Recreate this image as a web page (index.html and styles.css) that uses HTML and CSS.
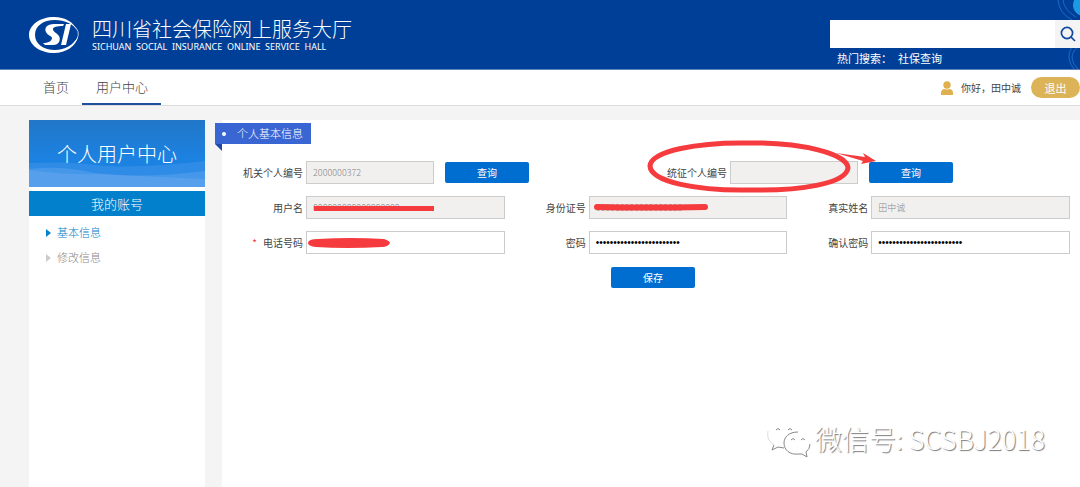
FILE: index.html
```html
<!DOCTYPE html>
<html lang="zh-CN">
<head>
<meta charset="utf-8">
<title>四川省社会保险网上服务大厅</title>
<link rel="stylesheet" href="styles.css">
</head>
<body>
<header class="header">
  <svg class="header-art" viewBox="0 0 30 69" aria-hidden="true">
    <circle cx="34" cy="5" r="11" fill="#1b9be6"/>
    <g fill="none" stroke="#1a6cc4">
      <path d="M8 0Q9 13 22 20"/><path d="M13 0Q14 10 26 17"/><path d="M30 41Q18 47 19 58Q20 65 24 69"/><path d="M30 46Q22 50 22 58Q23 65 28 69"/>
    </g>
  </svg>
  <div class="brand">
    <svg class="logo" viewBox="0 0 50 36" role="img" aria-label="SI">
      <path fill="#fff" fill-rule="evenodd" d="M48 14C45 5 36 0 25 0C11 0 0 8 0 18S11 36 25 36C37 36 47 29 49 20C44 28 36 33 26 33C15 33 6 27 6 18S14 3 26 3C36 3 45 7 48 14Z"/>
      <path fill="none" stroke="#fff" stroke-width=".7" d="M44 8Q52 14 48 22Q44 29 37 32"/>
      <path fill="#fff" d="M35 7H25C18 7 15 11 17 15C18 18 23 19 23 21C23 24 19 26 14 26L16 28H24C30 28 32 23 30 19C28 16 24 15 24 12C24 10 28 9 34 9Z"/>
      <path fill="#fff" d="M37 7H42L37 28H32Z"/>
    </svg>
    <div class="brand-text">
      <h1 class="brand-name">四川省社会保险网上服务大厅</h1>
      <p class="brand-en">SICHUAN  SOCIAL  INSURANCE  ONLINE  SERVICE  HALL</p>
    </div>
  </div>
  <div class="search-area">
    <form class="search">
      <input class="search-input" type="text" aria-label="搜索">
      <button class="search-button" type="button" aria-label="搜索">
        <svg class="search-icon" viewBox="0 0 16 16" fill="none" stroke="#114a9d" stroke-width="1.7"><circle cx="7" cy="7" r="5.6"/><path d="M11 11L15 15"/></svg>
      </button>
    </form>
    <p class="hot"><span>热门搜索：</span><a class="hot-link" href="#">社保查询</a></p>
  </div>
</header>

<nav class="nav">
  <div class="nav-links">
    <a class="nav-link" href="#">首页</a>
    <a class="nav-link nav-link-active" href="#">用户中心</a>
  </div>
  <div class="user">
    <svg class="user-icon" viewBox="0 0 12 14" fill="#dfb04e" aria-hidden="true"><circle cx="6" cy="4" r="3.7"/><path d="M0 14V12Q0 8 4 8Q6 9 8 8Q12 8 12 12V14Z"/></svg>
    <span>你好，田中诚</span>
    <button class="logout" type="button">退出</button>
  </div>
</nav>

<div class="page">
  <aside class="sidebar">
    <div class="banner">
      <svg class="banner-waves" viewBox="0 0 176 30" preserveAspectRatio="none" aria-hidden="true">
        <path fill="#2f8ce6" d="M0 6Q40 4 75 9Q120 11 176 4V30H0Z"/>
        <path fill="#4597ea" d="M0 12Q30 8 66 16Q110 22 176 14V30H0Z"/>
        <path fill="#569fec" d="M0 13Q34 18 70 17Q130 20 176 22V30H0Z"/>
      </svg>
      <h2 class="banner-title">个人用户中心</h2>
    </div>
    <h3 class="side-heading">我的账号</h3>
    <ul class="side-list">
      <li><a class="side-link side-link-active" href="#">基本信息</a></li>
      <li><a class="side-link" href="#">修改信息</a></li>
    </ul>
  </aside>

  <main class="main">
    <h2 class="ribbon">个人基本信息</h2>
    <form class="form">
      <div class="row row-two">
        <div class="field">
          <label class="label" for="org">机关个人编号</label>
          <input class="input input-short" id="org" type="text" value="2000000372" disabled>
          <button class="button" type="button">查询</button>
        </div>
        <div class="field">
          <label class="label" for="levy">统征个人编号</label>
          <input class="input input-short" id="levy" type="text" disabled>
          <button class="button" type="button">查询</button>
          <svg class="callout" viewBox="0 0 240 60" aria-hidden="true">
            <path fill="none" stroke="#f53b3d" stroke-width="5" d="M103 2C155 1 202 13 202 27C200 43 153 50 103 49C52 50 5 41 4 25C5 10 52 1 103 2Z"/>
            <path fill="#f53b3d" d="M190 12L219 16L217 12L230 20L215 23L217 20Z"/>
          </svg>
        </div>
      </div>
      <div class="row row-three">
        <div class="field">
          <label class="label" for="user">用户名</label>
          <input class="input" id="user" type="text" value="000000000000000000" disabled>
          <svg class="mark" viewBox="0 0 128 12" aria-hidden="true"><path fill="#f53b3d" d="M8 4H128V9H8Z"/></svg>
        </div>
        <div class="field">
          <label class="label" for="idno">身份证号</label>
          <input class="input" id="idno" type="text" value="000000000000000000" disabled>
          <svg class="mark" viewBox="0 0 128 12" aria-hidden="true"><path fill="none" stroke="#f53b3d" stroke-width="6" stroke-linecap="round" d="M8 5Q55 6 116 5"/></svg>
        </div>
        <div class="field">
          <label class="label" for="name">真实姓名</label>
          <input class="input" id="name" type="text" value="田中诚" disabled>
        </div>
      </div>
      <div class="row row-three">
        <div class="field">
          <label class="label" for="phone"><span class="required">*</span>电话号码</label>
          <input class="input" id="phone" type="tel">
          <svg class="mark" viewBox="0 0 128 12" aria-hidden="true"><path fill="#f53b3d" d="M2 6Q2 2 12 2Q45 0 78 2Q84 4 84 6Q82 10 76 10Q40 12 10 10Q2 9 2 6Z"/></svg>
        </div>
        <div class="field">
          <label class="label" for="pw">密码</label>
          <input class="input input-password" id="pw" type="password" value="abcdefghijklmnopqrstuvwx">
        </div>
        <div class="field">
          <label class="label" for="pw2">确认密码</label>
          <input class="input input-password" id="pw2" type="password" value="abcdefghijklmnopqrstuvwx">
        </div>
      </div>
      <div class="actions"><button class="button" type="button">保存</button></div>
    </form>
  </main>
</div>

<div class="watermark">
  <svg class="watermark-icon" viewBox="0 0 44 38" fill="#fff" aria-hidden="true">
    <path d="M16 1C7 1 1 6 1 14C1 19 3 22 7 25L5 30L11 27Q16 28 20 27C29 26 32 20 31 14C31 6 24 1 16 1Z"/>
    <path d="M30 12C22 12 17 17 17 23C17 30 23 35 31 34L35 34L40 37L39 32C42 30 43 27 43 23C43 17 37 12 30 12Z"/>
    <path fill="none" stroke="#ddd" d="M1 11Q-1 20 7 25"/>
    <path fill="none" stroke="#888" d="M7 25L5 30L11 27L17 28M31 12C22 12 17 17 17 23C17 30 23 35 31 34L35 34L40 37L39 32Q43 29 43 24M9 10Q11 7 13 10M21 10Q23 7 25 10M24 20Q26 17 28 20M34 20Q36 17 38 20"/>
  </svg>
  <span>微信号: SCSBJ2018</span>
</div>
</body>
</html>
```
FILE: styles.css
```css
* { box-sizing: border-box; }

body {
  margin: 0;
  min-height: 100vh;
  display: flex;
  flex-direction: column;
  position: relative;
  background: #f4f4f4;
  color: #444;
  font-family: "Noto Sans CJK SC", sans-serif;
  font-weight: 300;
  font-size: 10px;
}

h1, h2, h3, p, ul { margin: 0; padding: 0; font-weight: 300; }
ul { list-style: none; }
a { color: inherit; text-decoration: none; }
button, input { font: inherit; border: 0; padding: 0; margin: 0; border-radius: 0; }
svg { display: block; flex: none; }

.header {
  position: relative;
  display: flex;
  justify-content: space-between;
  height: 70px;
  padding-left: 29px;
  background: #003f98;
  border-bottom: 1px solid #5c83bc;
  color: #fff;
}
.header-art { position: absolute; right: 0; top: 0; width: 30px; height: 69px; }
.brand { display: flex; align-items: center; gap: 13px; }
.logo { width: 50px; height: 36px; }
.brand-name { font-size: 20px; line-height: 24px; }
.brand-en {
  font-family: "Noto Sans", sans-serif;
  font-weight: 400;
  font-size: 9px;
  line-height: 12px;
  white-space: pre;
}

.search-area { position: relative; width: 250px; padding-top: 20px; }
.search { display: flex; height: 28px; background: #fff; }
.search-input { flex: 1; min-width: 0; background: #fff; }
.search-button { width: 25px; background: #f4f4f4; display: flex; align-items: center; justify-content: center; }
.search-icon { width: 16px; height: 16px; }
.hot { display: flex; gap: 6px; padding-left: 7px; font-size: 11px; line-height: 21px; font-weight: 400; }

.nav {
  display: flex;
  justify-content: space-between;
  height: 36px;
  padding-left: 29px;
  background: #fff;
  border-bottom: 1px solid #ddd;
}
.nav-links { display: flex; }
.nav-link { padding: 0 13px 0 14px; font-size: 13px; line-height: 34px; }
.nav-link-active { border-bottom: 2px solid #1c4f9f; }
.user { display: flex; align-items: center; gap: 8px; font-weight: 400; }
.user-icon { width: 12px; height: 14px; }
.logout {
  width: 49px;
  height: 21px;
  margin-left: 2px;
  border-radius: 11px;
  background: #dcb457;
  color: #fff;
  font-size: 11px;
}

.page { flex: 1; display: flex; gap: 17px; padding: 14px 0 0 29px; }

.sidebar { width: 176px; background: #fff; }
.banner {
  position: relative;
  height: 67px;
  background: linear-gradient(#2177c8, #1c82e2 60%);
  color: #fff;
  text-align: center;
}
.banner-waves { position: absolute; left: 0; bottom: 0; width: 100%; height: 30px; }
.banner-title { position: relative; font-size: 20px; line-height: 67px; }
.side-heading {
  margin-top: 4px;
  background: #0380cb;
  color: #fff;
  font-size: 13px;
  line-height: 25px;
  text-align: center;
}
.side-list { padding: 4px 17px; }
.side-link { display: flex; align-items: center; gap: 6px; font-size: 11px; line-height: 25px; color: #888; }
.side-link::before {
  content: "";
  border: 4px solid transparent;
  border-left: 5px solid #ccc;
  border-right: 0;
}
.side-link-active { color: #0380cb; }
.side-link-active::before { border-left-color: #0380cb; }

.main { flex: 1; min-width: 0; background: #fff; padding-top: 3px; }
.ribbon {
  position: relative;
  display: flex;
  align-items: center;
  gap: 11px;
  width: max-content;
  margin-left: -7px;
  padding: 0 8px 0 7px;
  background: #3966d3;
  color: #fff;
  font-size: 11px;
  line-height: 21px;
}
.ribbon::before { content: ""; width: 4px; height: 4px; border-radius: 50%; background: #fff; }
.ribbon::after {
  content: "";
  position: absolute;
  left: 0;
  top: 100%;
  border-top: 7px solid #2148a8;
  border-left: 7px solid transparent;
}

.form { display: grid; gap: 12px; padding: 17px 10px 12px 0; }
.row { display: grid; }
.row-two { grid-template-columns: repeat(2, 1fr); }
.row-three { grid-template-columns: repeat(3, 1fr); }
.field { position: relative; display: flex; align-items: center; gap: 3px; min-width: 0; }
.label { width: 81px; text-align: right; white-space: nowrap; color: #444; font-weight: 400; }
.required { margin-right: 6px; color: #e33; }
.input {
  flex: 1;
  min-width: 0;
  height: 23px;
  padding: 0 6px;
  border: 1px solid #ccc;
  background: #fff;
  color: #222;
  font-size: 9px;
}
.input:disabled { background: #f2f0ef; color: #888; }
.input-short { flex: none; width: 128px; margin-right: 8px; }
.input-password { font-family: "Liberation Sans", sans-serif; font-size: 10px; color: #000; }
.button {
  width: 84px;
  height: 21px;
  border-radius: 2px;
  background: #006ed0;
  color: #fff;
  font-weight: 400;
}
.actions { display: flex; justify-content: center; padding: 1px 0 0 14px; }
.mark { position: absolute; left: 84px; top: 6px; width: 128px; height: 12px; }
.callout { position: absolute; left: 0; top: -20px; width: 240px; height: 60px; overflow: visible; }

.watermark {
  position: absolute;
  right: 35px;
  bottom: 28px;
  display: flex;
  align-items: center;
  gap: 4px;
  color: #fff;
  font-size: 27px;
  line-height: 40px;
  text-shadow: 1px 1px 1px #777;
}
.watermark-icon { width: 44px; height: 38px; }
```
